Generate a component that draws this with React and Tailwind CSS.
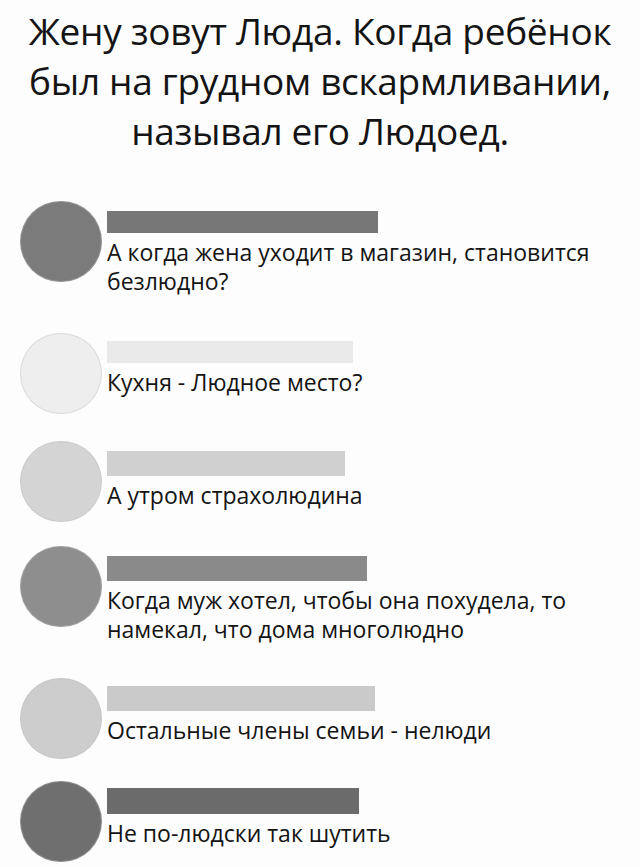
import React from 'react';

const comments = [
  {
    text: 'А когда жена уходит в магазин, становится безлюдно?',
    avatar: 'bg-[#7b7b7b]',
    bar: 'bg-[#777777] w-[271px] mt-[10px] h-[22px]',
    row: 'h-[132px]',
  },
  {
    text: 'Кухня - Людное место?',
    avatar: 'bg-[#eeeeee]',
    bar: 'bg-[#eaeaea] w-[246px] mt-[8px] h-[22px]',
    row: 'h-[108px]',
  },
  {
    text: 'А утром страхолюдина',
    avatar: 'bg-[#d4d4d4]',
    bar: 'bg-[#d0d0d0] w-[238px] mt-[10px] h-[25px]',
    row: 'h-[105px]',
  },
  {
    text: 'Когда муж хотел, чтобы она похудела, то намекал, что дома многолюдно',
    avatar: 'bg-[#8e8e8e]',
    bar: 'bg-[#8a8a8a] w-[260px] mt-[10px] h-[25px]',
    row: 'h-[132px]',
  },
  {
    text: 'Остальные члены семьи - нелюди',
    avatar: 'bg-[#cdcdcd]',
    bar: 'bg-[#cacaca] w-[268px] mt-[8px] h-[25px]',
    row: 'h-[103px]',
  },
  {
    text: 'Не по-людски так шутить',
    avatar: 'bg-[#6f6f6f]',
    bar: 'bg-[#6b6b6b] w-[252px] mt-[7px] h-[26px]',
    row: 'h-[84px]',
  },
];

function Comment({ item }) {
  return (
    <div className={`flex items-start ${item.row}`}>
      <div className={`w-[82px] h-[81px] shrink-0 rounded-full border border-[#bdbdbd]/40 ${item.avatar}`} />
      <div className="ml-[5px] flex flex-col">
        <div className={item.bar} />
        <p className="mt-[5px] max-w-[500px] text-[23px] leading-[29px] text-[#141414]">{item.text}</p>
      </div>
    </div>
  );
}

export default function App() {
  return (
    <div className="w-[640px] h-[867px] overflow-hidden bg-[#fdfdfd] font-['Open_Sans',sans-serif]">
      <h1 className="pt-[6px] text-center text-[37px] leading-[50px] text-[#141414] tracking-[-0.3px]">
        Жену зовут Люда. Когда ребёнок
        <br />
        был на грудном вскармливании,
        <br />
        называл его Людоед.
      </h1>
      <div className="mt-[45px] pl-[20px]">
        {comments.map((item, i) => (
          <Comment key={i} item={item} />
        ))}
      </div>
    </div>
  );
}
